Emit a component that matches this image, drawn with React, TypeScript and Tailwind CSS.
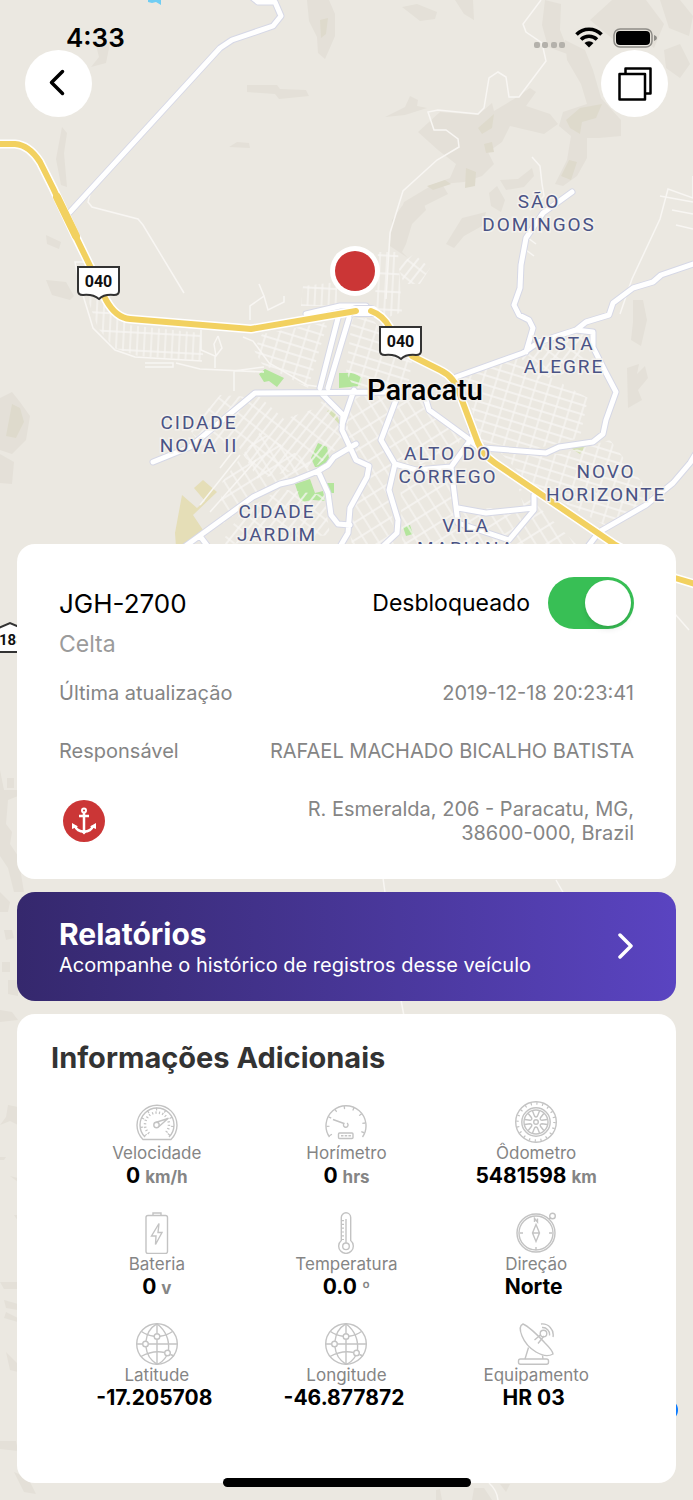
import React, { useState } from 'react';

interface MapLabel {
  x: number;
  y: number;
  lines: string[];
}

interface InfoItem {
  label: string;
  value: string;
  unit?: string;
  icon: React.ReactNode;
}

const terrain = [
  'M307 0h22l6 14 0 22-6 14-4 9-7-6-1-16-8-16z',
  'M247 85h30l3 4 26 1 3 6-30 3-4-5-28-2z',
  'M62 127l5 6-3 20 3 34-6-2-5-26z',
  'M96 45l14-2-4 20-15 4 8-10z',
  'M46 235l15 7-2 7-12-5z',
  'M229 147l8-5 12 1 1 5z',
  'M402 7l15-3 20 8-2 7-15 2z',
  'M455 0h18l1 20-10-6z',
  'M545 0l16 4-1 26 10 25-22-8-6-22z',
  'M385 117l20-10 5-11 8 4-1 6 10 2-22 7z',
  'M440 112l38 3 14-12 2 8 20-12 16-11 6 4-10 14 24 8 8 10-14 10-34-8-8 16-14 10 6 12-12 12-18 6-22 2 6 10-24 12-16 20-14 0 10-24 30-18 16-6 6-14-18-14-20-18z',
  'M565 40l20 10 8 20 8 28 20 22 0 16-22 2-12 0 0 20-10 18-14 10-8-2 12-24 4-24-12-10 4-14 24-8-6-20-14-24z',
  'M590 20l22-20 34 0 18 24-10 24-18-14-22 6z',
  'M660 0h20l13 16-4 20-20-8zM664 50l16-6 10 20-10 14-14-10z',
  'M500 180l18-1 14-11 2 8-10 11-18 3z',
  'M489 193l8-7 8 14-4 12-10-6z',
  'M462 218l24-6-4 14-18 10-10 12-8-4z',
  'M402 206l20-8 4 12-14 14-6 20-4 8 6 6-18-12 2-26z',
  'M46 280l20 2 8 14-4 4-18-5z',
  'M0 398l12-6 8 10 10 14-4 24-14 14-12-4z',
  'M0 454l14 8-2 22-12-1z',
  'M633 300l10 0 4 20-6 26-10-6 2-18z',
  'M627 368l12-4-2 10 8-8 3 12-10 12 4 10-14 8z',
  'M7 778l7 0 0 10-7 0zM0 770l4 20 14 0 0 6-10 4-2 24 6 8-2 12 8 12 6 36-10 0-6-24-8-12z',
  'M0 892l10 10-2 10-8 0zM4 930l8 0 2 8-8 2zM2 962l8 0 0 10-8 0zM8 980l10 0 0 16-10-2z',
  'M0 1010l12 2 6 8-18 2zM8 1105l10 2 0 18-8-4-10 4 6-8z',
  'M0 1157l6 0-2 3-4 0zM10 1176l8 2 0 4zM14 1215l4 0 0 6z',
  'M0 1282l18 0 0 7-14 0zM4 1300l14 4 0 6-12-2zM6 1312l12 6 0 4-14-4z',
  'M6 1352l12 12 0 8-8-2zM0 1441l16 0 2 10-18-2zM14 1472l14 6 8 16-12-2z',
  'M436 1490l4-1 2 11-6 0zM474 1488l10 0 8 12-20 0zM500 1484l10 0-4 8z',
];

const deepTerrain = [
  'M478 128l16-14-2 14-10 6z',
  'M484 144l8-2 2 10-8 1z',
  'M427 186l18-6 6 4-18 6z',
  'M466 168l10 4-1 14-10 2z',
  'M566 120l14-12 22-4-6 14-14 4-2 12-10-6z',
  'M569 160l8 2-6 18-10-4z',
  'M12 404l8 4 4 14-8 16-10-2z',
  'M320 20l8-2-2 16-5 4z',
];

const minorRoads = [
  'M90 194l-2 8 4 5 46 12 5 6 41 68',
  'M541 0l-18 24 3 8 16 11 4 18-15 20-12 16-10 0-3-20-8-5-9 6-5 30-6 6-40-4-10 2 6 18 12 0 12 9 1 8-22 13-34 31-13 42-4 66',
  'M532 157l8 9 2 18 2 12-14 14',
  'M693 176l0 22-25-9-8 30-28 60-12 35',
  'M660 196l33 6M672 210l21 4M676 225l17 4',
  'M528 238l8 6M526 250l8 6',
  'M88 262l-13 0 4 20 14 46 22 22 20 7 67 4M145 363l28 0 0 4-28 0M176 363l24 6 64 3M243 337l10 4 16 22 38 22 14 2',
  'M218 336l-4 8 2 12 6-8-4-12M201 330l0 20 14 6 0 12',
  'M200 505l40-50M210 512l46-52M220 468l14-18',
  'M234 391l0-20 30-4M250 320l0-14 14-10-5-12M264 296l4 14 16-8 0-6',
  'M383 878l3 22M556 880l8 14M401 1000l3 16M675 614l14 16M489 1483q8 7 9 17',
];

const majorRoads = [
  'M70 212L220 48L232 40L273 26L281 16L275 2L258 2L248 -6',
  'M153 462L190 447L255 393L400 392',
  'M338 318L320 388M349 318L328 388',
  'M322 394L343 415L342 430L356 460L369 466L367 477L350 508L348 533L338 550',
  'M180 550L253 497L280 484L293 481L318 471L328 465L334 457L356 444',
  'M318 471L328 493L331 515L338 524L350 525',
  'M200 536L212 552',
  'M354 390L342 425',
  'M396 400L381 440L395 464L389 490L398 520L397 533L380 549',
  'M395 464L416 470L451 467L469 442',
  'M426 400L429 410L466 437L482 450',
  'M451 467L458 523L509 540L534 510L534 495',
  'M458 508L486 513L534 508',
  'M484 448L546 453L559 447L593 442L603 434L606 420L616 392L606 373L593 347L593 332L576 330',
  'M456 377L523 353L539 342L576 330L586 322L609 315L613 303L633 288L653 282L661 275L693 264',
  'M572 192L543 213L526 238L521 265L520 288L514 305L519 315L529 320L533 328L526 352',
  'M698 450L690 463L673 483L646 505L599 532L586 549',
  'M306 314L340 306L366 306',
  'M460 388L474 440',
];

const highway =
  'M-5 144H15Q29 145 40 162L53 188L75 235L92 270L106 300Q116 318 130 319L251 329L356 311M371 311Q383 315 390 328L412 356L440 370Q455 377 460 395L478 443Q483 455 495 463L614 544L675 578L698 585';

const mapLabels: MapLabel[] = [
  { x: 539, y: 208, lines: ['SÃO', 'DOMINGOS'] },
  { x: 564, y: 350, lines: ['VISTA', 'ALEGRE'] },
  { x: 199, y: 429, lines: ['CIDADE', 'NOVA II'] },
  { x: 277, y: 518, lines: ['CIDADE', 'JARDIM'] },
  { x: 448, y: 460, lines: ['ALTO DO', 'CÓRREGO'] },
  { x: 606, y: 478, lines: ['NOVO', 'HORIZONTE'] },
  { x: 466, y: 532, lines: ['VILA', 'MARIANA'] },
];

// small city blocks: [pattern id, area outline]
const blocks: [string, string][] = [
  ['gridA', 'M88 300l10-20 30 45 72 8 4 28-66-5-24-8-16-20z'],
  ['gridB', 'M262 334l66-12-20 66-46-24-8-14z'],
  ['gridB', 'M352 318l20 0 20 28 20 14-4 28-54 0-8-16z'],
  ['gridA', 'M303 286l34-4 0 24-36 0zM378 252l20 0 4 60-16 6-12-6z'],
  ['gridC', 'M398 266l16-12 16 14-10 16-16 0z'],
  ['gridC', 'M190 430l30-35 30 2 10 0 24 22 30-10 14-14 20 24 0 20-30 26-60 14-24-40-30 10z'],
  ['gridD', 'M222 482l38-50 60 36-60 28-40 30z'],
  ['gridC', 'M240 514l40-25 44 6 6 40-110 10z'],
  ['gridD', 'M348 396l46 0-14 44 12 24-4 28 8 52-44 0-6-30 20-42-22-30z'],
  ['gridD', 'M398 400l24 0 40 38-16 26-48 0-14-24z'],
  ['gridB', 'M462 378l50-24 40 24 36 20-8 40-50 12-48-8z'],
  ['gridC', 'M545 340l38-18 6 24-12 24-38 10-18-22z'],
  ['gridB', 'M500 452l60 2 50-14 44 58-48 28-76-42z'],
  ['gridD', 'M400 470l46 0 8 38 70 0-6-22 60 60-176 0z'],
];

const Shield = ({ x, y }: { x: number; y: number }) => (
  <g transform={`translate(${x} ${y})`}>
    <path
      d="M1 1H42V25Q42 29 37 29Q27 28 22 33Q16 28 6 29Q1 29 1 25Z"
      fill="#fff"
      stroke="#333"
      strokeWidth="2"
    />
    <text x="21.5" y="21" textAnchor="middle" className="font-['Roboto',sans-serif] text-[16px] font-bold" fill="#111">
      040
    </text>
  </g>
);

const CityMap = () => (
  <svg
    className="absolute inset-0 h-full w-full"
    viewBox="0 0 693 1500"
    preserveAspectRatio="xMidYMin slice"
    role="img"
    aria-label="Mapa de Paracatu"
  >
    <defs>
      <pattern id="gridA" width="7" height="18" patternUnits="userSpaceOnUse" patternTransform="rotate(3)">
        <path d="M0 1H7M1 0V18" stroke="#f8f6f3" strokeWidth="1.3" fill="none" />
      </pattern>
      <pattern id="gridB" width="13" height="9" patternUnits="userSpaceOnUse" patternTransform="rotate(17)">
        <path d="M0 1H13M1 0V9" stroke="#f8f6f3" strokeWidth="1.3" fill="none" />
      </pattern>
      <pattern id="gridC" width="15" height="8" patternUnits="userSpaceOnUse" patternTransform="rotate(-52)">
        <path d="M0 1H15M1 0V8" stroke="#f8f6f3" strokeWidth="1.3" fill="none" />
      </pattern>
      <pattern id="gridD" width="11" height="15" patternUnits="userSpaceOnUse" patternTransform="rotate(-32)">
        <path d="M0 1H11M1 0V15" stroke="#f8f6f3" strokeWidth="1.3" fill="none" />
      </pattern>
    </defs>

    <path d={terrain.join('')} fill="#e4e0d8" />
    <path d={deepTerrain.join('')} fill="#dedacc" />
    <path d="M148 0h13v5l-5-3-4 1-4-1z" fill="#70cdf3" />

    <path d="M182 495l15 13 8-7-11-13 9-8 14 12-24 23 12 18-18 14-11 0-1-14z" fill="#e5deb7" />
    <g fill="#b4e59c">
      <path d="M259 374l6-5 19 9-7 9-8-6-5 1z" />
      <path d="M339 373h15l8 5-2 8-21 2z" />
      <path d="M311 458l7-15 9 4 2 11-5 9-9 0z" />
      <path d="M295 484l15-5 5 14 8-2 2 10-12-1-12 2zM327 483h7v10h-7z" />
      <path d="M403 527l7-2 3 9-7 2z" />
    </g>
    <path d="M327 411l6-2 7 13-1 2zM571 448l15-2-6 8z" fill="#d5e0b5" />

    {blocks.map(([id, d]) => (
      <path key={d} d={d} fill={`url(#${id})`} />
    ))}
    <path d={minorRoads.join('')} fill="none" stroke="#f8f6f3" strokeWidth="1.5" />

    <g fill="none" strokeLinejoin="round" strokeLinecap="round">
      <path d={majorRoads.join('')} stroke="#d6d8e6" strokeWidth="7" />
      <path d={majorRoads.join('')} stroke="#fff" strokeWidth="5" />
      <path d={highway} stroke="#fff" strokeWidth="9" />
      <path d="M356 311H371" stroke="#d6d8e6" strokeWidth="12" />
      <path d="M354 311H373" stroke="#fff" strokeWidth="10" />
      <path d={highway} stroke="#f2d160" strokeWidth="6" />
      <path d="M57 197L76 236" stroke="#f2d160" strokeWidth="8" />
    </g>

    <Shield x={77} y={266} />
    <Shield x={379} y={326} />
    <g>
      <path d="M-6 652H24V629L10 623L-6 630Z" fill="#fff" stroke="#333" strokeWidth="2" />
      <text x="-1" y="645" className="font-['Roboto',sans-serif] text-[15px] font-bold" fill="#111">
        188
      </text>
    </g>

    <g
      className="font-['Roboto',sans-serif] text-[19px] tracking-widest"
      fill="#4a5385"
      stroke="#f4f2ee"
      strokeWidth="3"
      paintOrder="stroke"
      textAnchor="middle"
    >
      {mapLabels.map(({ x, y, lines }) =>
        lines.map((line, i) => (
          <text key={line + y} x={x} y={y + i * 23}>
            {line}
          </text>
        ))
      )}
    </g>
    <text
      x="425"
      y="400"
      textAnchor="middle"
      className="font-['Roboto',sans-serif] text-[29px] font-medium"
      stroke="#f4f2ee"
      strokeWidth="3"
      paintOrder="stroke"
    >
      Paracatu
    </text>

    <circle cx="355" cy="271" r="25" fill="#fff" />
    <circle cx="355" cy="271" r="20" fill="#cb3636" />
    <circle cx="667" cy="1410" r="11" fill="#0a7aff" />
  </svg>
);

const StatusBar = () => (
  <div className="flex h-[50px] items-end justify-between pr-[36px] pl-[66px]">
    <span className="text-[26px] leading-6 font-semibold">4:33</span>
    <svg width="123" height="24" viewBox="0 0 123 24" aria-hidden="true">
      <g fill="#b4b1ab">
        <rect x="0" y="16" width="6" height="6" rx="2" />
        <rect x="8" y="16" width="6" height="6" rx="2" />
        <rect x="17" y="16" width="6" height="6" rx="2" />
        <rect x="25" y="16" width="6" height="6" rx="2" />
      </g>
      <g fill="none" stroke="#000" strokeWidth="3.6">
        <path d="M42.5 8.5A17.5 17.5 0 0 1 67.5 8.5" />
        <path d="M47 13.5A11.5 11.5 0 0 1 63 13.5" />
      </g>
      <path d="M55 21.5L50.5 17A6.5 6.5 0 0 1 59.5 17Z" />
      <rect x="80" y="3" width="38" height="18" rx="6" fill="none" stroke="#8e8c87" strokeWidth="1.5" />
      <rect x="82" y="5" width="34" height="14" rx="4" />
      <path d="M120 9Q123 10 123 12T120 15Z" fill="#8e8c87" />
    </svg>
  </div>
);

const SpeedIcon = () => (
  <>
    <path d="M7 38.5A20 20 0 1 1 35 38.5Z" />
    <path d="M9 36A17 17 0 1 1 33 36" />
    <path d="M10 34.5A15.5 15.5 0 1 1 32 34.5" strokeWidth="3" strokeDasharray="1.2 7.6" />
    <path d="M13 32.5A12 12 0 1 1 29 32.5" strokeWidth="2.5" strokeDasharray="1.2 2.2" />
    <circle cx="20.5" cy="24" r="2.7" />
    <path d="M19.5 21.5L32 17.5L23 25.5" />
  </>
);

const HourIcon = () => (
  <>
    <path d="M4.5 36A20 20 0 1 1 37.5 36" />
    <path d="M6 34.5A18 18 0 1 1 36 34.5" strokeWidth="3" strokeDasharray="1.3 7.8" />
    <path d="M19 22.5L8 18.5M19.5 22A2.3 2.3 0 1 0 22 22" />
    <rect x="13.5" y="32" width="14.5" height="5.5" rx="1" />
    <path d="M16 34.8H26" strokeDasharray="2.5 1.2" />
  </>
);

const WheelIcon = () => (
  <>
    <circle cx="21" cy="21" r="20.3" />
    <circle cx="21" cy="21" r="18.5" strokeWidth="2.5" strokeDasharray="1.2 4.6" />
    <circle cx="21" cy="21" r="14.2" />
    <circle cx="21" cy="21" r="12" />
    <circle cx="21" cy="21" r="2.3" />
    {[0, 60, 120, 180, 240, 300].map((angle) => (
      <path key={angle} d="M17.5 10L19.5 15Q21 17 22.5 15L24.5 10" transform={`rotate(${angle} 21 21)`} />
    ))}
  </>
);

const BatteryIcon = () => (
  <>
    <rect x="10" y="3.5" width="21.5" height="38" rx="2" />
    <path d="M17 3.5V1H25V3.5" />
    <path d="M23 11.5L15.5 24H20L19.5 32.5L26 20.5H22Z" />
  </>
);

const TemperatureIcon = () => (
  <>
    <path d="M16.3 28.5V5.5A4.7 4.7 0 0 1 25.7 5.5V28.5A7.3 7.3 0 1 1 16.3 28.5Z" />
    <circle cx="21" cy="34.3" r="3.3" />
    <path d="M21 31V7" />
    <path d="M18 8V28" strokeWidth="2" strokeDasharray="1.2 2.6" />
  </>
);

const CompassIcon = () => (
  <>
    <circle cx="21" cy="21" r="19" />
    <circle cx="21" cy="21" r="17" />
    <circle cx="37.5" cy="4" r="2.8" />
    <path d="M34 7L36 5.500M5 21H8M34 21H37M21 35V38" />
    <path d="M21 12.5L24.5 21L21 29.5L17.5 21ZM17.5 21H24.5" />
    <path d="M19.5 10V6.500L22.5 10V6.500" />
  </>
);

const GlobeIcon = () => (
  <>
    <circle cx="21" cy="21" r="20.3" />
    <path d="M21 .7V10.5M21 16.5V41.3M.7 21H6.5M12.5 21H41.3" />
    <path d="M21 .7Q11 7 10 18M10 24Q11 35 21 41.3M21 .7Q34 11 32.5 27M30.5 33Q27 39 21 41.3" />
    <path d="M5.5 8.5Q11 12.5 18 13.3M24 13.3Q31 12.5 36.5 8.5M5 33.5Q17 27 28.5 29.5M34.5 31.5L38 33" />
    <circle cx="21" cy="13.5" r="2.8" />
    <circle cx="9.5" cy="21" r="2.8" />
    <circle cx="31.5" cy="30" r="2.8" />
  </>
);

const AntennaIcon = () => (
  <>
    <rect x="3.5" y="36" width="30" height="5.3" rx="2" />
    <path d="M10 36L13.5 24.5M28 36L27.5 32.5" />
    <path d="M8 1Q3 3 7 13Q11 23 21 29Q31 35 38 31Q38 28 30 20Q15 4 8 1Z" />
    <path d="M19.5 17L26 11.5M23 20.5L29 13" />
    <circle cx="28.5" cy="10.5" r="3.3" />
    <path d="M27 4.5A7 7 0 0 1 34.5 12.5M26 1A11 11 0 0 1 38 14" />
  </>
);

const infoItems: InfoItem[] = [
  { label: 'Velocidade', value: '0', unit: 'km/h', icon: <SpeedIcon /> },
  { label: 'Horímetro', value: '0', unit: 'hrs', icon: <HourIcon /> },
  { label: 'Ôdometro', value: '5481598', unit: 'km', icon: <WheelIcon /> },
  { label: 'Bateria', value: '0', unit: 'v', icon: <BatteryIcon /> },
  { label: 'Temperatura', value: '0.0', unit: 'º', icon: <TemperatureIcon /> },
  { label: 'Direção', value: 'Norte', icon: <CompassIcon /> },
  { label: 'Latitude', value: '-17.205708', icon: <GlobeIcon /> },
  { label: 'Longitude', value: '-46.877872', icon: <GlobeIcon /> },
  { label: 'Equipamento', value: 'HR 03', icon: <AntennaIcon /> },
];

const InfoCell = ({ label, value, unit, icon }: InfoItem) => (
  <div className="flex h-[111px] flex-col items-center whitespace-nowrap">
    <svg className="size-[42px]" viewBox="0 0 42 42" fill="none" stroke="#c3c3c3" strokeWidth="1.4" aria-hidden="true">
      {icon}
    </svg>
    <dt className="text-[17px] leading-5 text-[#858585]">{label}</dt>
    <dd className="text-[21px] leading-[26px] font-bold">
      {value}
      <span className="ml-[5px] text-[17px] text-[#858585]">{unit}</span>
    </dd>
  </div>
);

const VehicleCard = () => {
  const [unlocked, setUnlocked] = useState(true);

  return (
    <section className="rounded-[18px] bg-white px-[42px] pt-[33px] pb-[34px]">
      <div className="flex items-center justify-between">
        <h1 className="text-[26px]">JGH-2700</h1>
        <label className="flex items-center gap-[18px] text-[23px]">
          Desbloqueado
          <input
            type="checkbox"
            role="switch"
            checked={unlocked}
            onChange={(e) => setUnlocked(e.target.checked)}
            className="h-[52px] w-[86px] cursor-pointer appearance-none rounded-full bg-gray-300 p-[3px] before:block before:size-[46px] before:rounded-full before:bg-white before:shadow-md before:transition checked:bg-[#38bf55] checked:before:translate-x-[34px]"
          />
        </label>
      </div>
      <p className="text-[23px] leading-[30px] text-[#9b9b9b]">Celta</p>
      <dl className="mt-[22px] flex flex-col gap-[34px] text-[20px] leading-6 text-[#858585]">
        <div className="flex justify-between">
          <dt>Última atualização</dt>
          <dd>2019-12-18 20:23:41</dd>
        </div>
        <div className="flex justify-between">
          <dt>Responsável</dt>
          <dd>RAFAEL MACHADO BICALHO BATISTA</dd>
        </div>
        <div className="flex items-center justify-between">
          <dt className="ml-1">
            <svg className="size-[42px]" viewBox="0 0 42 42" role="img" aria-label="Endereço">
              <circle cx="21" cy="21" r="21" fill="#cb3636" />
              <g fill="none" stroke="#fff" strokeWidth="2.5">
                <circle cx="21" cy="10.5" r="2" strokeWidth="2" />
                <path d="M21 12.5V32M16 16H26" />
                <path d="M12 26Q14 31.5 21 31.5Q28 31.5 30 26" />
              </g>
              <path d="M9 29V23L15 26.5ZM33 29V23L27 26.5ZM17.5 31L21 34.5L24.5 31Z" fill="#fff" />
            </svg>
          </dt>
          <dd className="text-right">
            R. Esmeralda, 206 - Paracatu, MG,
            <br />
            38600-000, Brazil
          </dd>
        </div>
      </dl>
    </section>
  );
};

const App = () => (
  <div className="relative min-h-screen overflow-hidden bg-[#ebe8e1] font-['Inter',sans-serif] text-black">
    <CityMap />

    <div className="relative">
      <StatusBar />
      <header className="flex justify-between px-[25px]">
        <button type="button" aria-label="Voltar" className="grid size-[67px] place-items-center rounded-full bg-white">
          <svg width="34" height="34" viewBox="0 0 34 34" fill="none" stroke="#000" strokeWidth="3.5" strokeLinecap="round" strokeLinejoin="round">
            <path d="M20.5 4.5L9.5 15.5L20.5 26.5" />
          </svg>
        </button>
        <button type="button" aria-label="Camadas" className="grid size-[67px] place-items-center rounded-full bg-white">
          <svg width="34" height="34" viewBox="0 0 34 34" fill="none" stroke="#000" strokeWidth="2.5" strokeLinejoin="round">
            <rect x="1.5" y="7" width="25.5" height="25.5" />
            <path d="M7.5 7V1.5H32.5V26.5H27" />
          </svg>
        </button>
      </header>

      <main className="flex flex-col gap-[13px] px-[17px] pt-[427px] pb-[17px]">
        <VehicleCard />

        <a
          href="#relatorios"
          className="flex items-center justify-between rounded-[18px] bg-linear-to-r from-[#35286d] to-[#5a44c1] px-[42px] py-[23px] text-white"
        >
          <span>
            <strong className="block text-[30px] leading-[38px] font-bold">Relatórios</strong>
            <span className="block text-[20px] leading-[25px]">Acompanhe o histórico de registros desse veículo</span>
          </span>
          <svg width="16" height="28" viewBox="0 0 16 28" fill="none" stroke="#fff" strokeWidth="3.5" strokeLinecap="round" strokeLinejoin="round">
            <path d="M2 2L13 13L2 24" />
          </svg>
        </a>

        <section className="rounded-[18px] bg-white px-[34px] pt-6 pb-[49px]">
          <h2 className="text-[29px] leading-10 font-bold text-[#333]">Informações Adicionais</h2>
          <dl className="mx-[11px] mt-[23px] grid grid-cols-3">
            {infoItems.map((item) => (
              <InfoCell key={item.label} {...item} />
            ))}
          </dl>
        </section>
      </main>
    </div>

    <div className="absolute bottom-[13px] left-1/2 h-[9px] w-[248px] -translate-x-1/2 rounded-full bg-black" />
  </div>
);

export default App;
